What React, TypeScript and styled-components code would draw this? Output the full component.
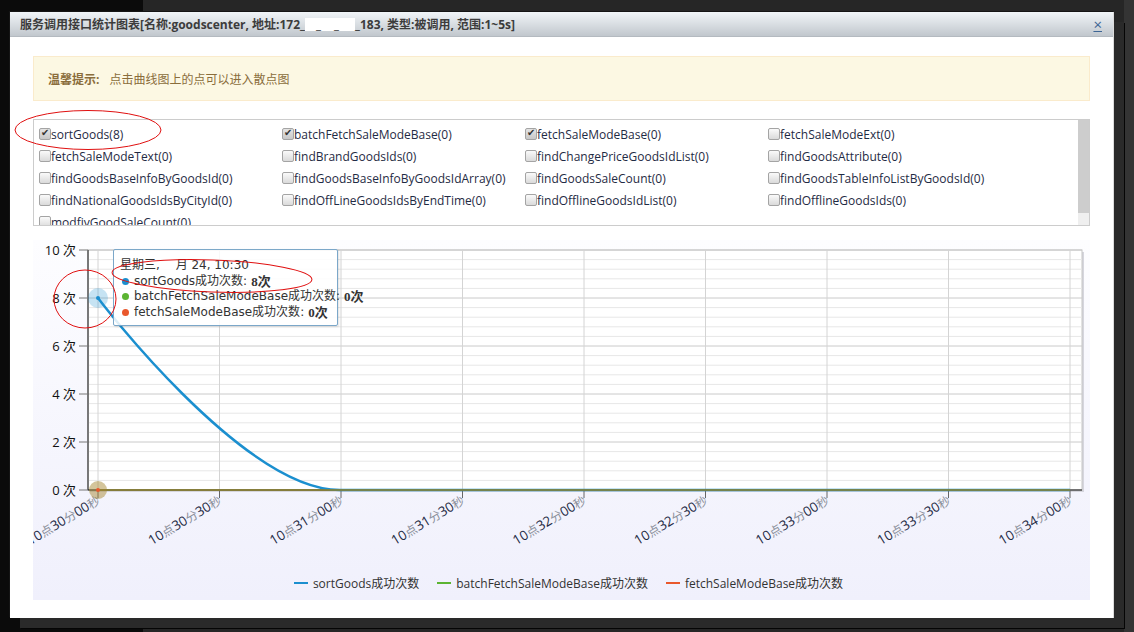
import React from 'react';
import styled, { createGlobalStyle } from 'styled-components';

const methods = [
  { name: 'sortGoods', count: 8, checked: true },
  { name: 'batchFetchSaleModeBase', count: 0, checked: true },
  { name: 'fetchSaleModeBase', count: 0, checked: true },
  { name: 'fetchSaleModeExt', count: 0 },
  { name: 'fetchSaleModeText', count: 0 },
  { name: 'findBrandGoodsIds', count: 0 },
  { name: 'findChangePriceGoodsIdList', count: 0 },
  { name: 'findGoodsAttribute', count: 0 },
  { name: 'findGoodsBaseInfoByGoodsId', count: 0 },
  { name: 'findGoodsBaseInfoByGoodsIdArray', count: 0 },
  { name: 'findGoodsSaleCount', count: 0 },
  { name: 'findGoodsTableInfoListByGoodsId', count: 0 },
  { name: 'findNationalGoodsIdsByCityId', count: 0 },
  { name: 'findOffLineGoodsIdsByEndTime', count: 0 },
  { name: 'findOfflineGoodsIdList', count: 0 },
  { name: 'findOfflineGoodsIds', count: 0 },
  { name: 'modfiyGoodSaleCount', count: 0 },
];

const series = [
  { name: 'sortGoods成功次数', color: '#1b8fcf' },
  { name: 'batchFetchSaleModeBase成功次数', color: '#5bb432' },
  { name: 'fetchSaleModeBase成功次数', color: '#e9582c' },
];

// plot geometry, relative to the chart panel
const X0 = 55;
const X1 = 1049;
const Y0 = 10;
const Y1 = 250;
const UNIT = 24;
const ticks = Array.from({ length: 9 }, (_, i) => 65 + i * 121.5);

const pad = (n: number) => (n < 10 ? '0' + n : String(n));

function timeParts(i: number) {
  const secs = 30 * 60 + i * 30;
  return [
    ['10', 'n'],
    ['点', 'c'],
    [pad(Math.floor(secs / 60)), 'n'],
    ['分', 'c'],
    [pad(secs % 60), 'n'],
    ['秒', 'c'],
  ];
}

const GlobalStyle = createGlobalStyle`
  body {
    margin: 0;
    background: #1c1c1c;
    font-family: "Open Sans", "Noto Sans CJK SC", sans-serif;
  }
`;

const Backdrop = styled.div`
  position: relative;
  width: 1134px;
  height: 632px;
  overflow: hidden;
  padding: 12px 0 0 10px;
  box-sizing: border-box;
  background: linear-gradient(to right, #0b0b0b 0 143px, #262626 143px 1124px, #343434 1124px);
`;

const Modal = styled.div`
  width: 1103px;
  height: 606px;
  background: #fff;
  border-right: 1px solid #dcdcdc;
  box-shadow: 10px 10px 0 #2a2a2a, 11px 11px 0 #050505, -1px -1px 0 #151515;
  display: flex;
  flex-direction: column;
`;

const Header = styled.div`
  height: 24px;
  flex: none;
  display: flex;
  align-items: center;
  justify-content: space-between;
  padding: 0 10px;
  background: linear-gradient(to bottom, #f1f5f8, #c1c7cd);
  border-bottom: 1px solid #b4bac0;
`;

const Title = styled.div`
  font-size: 12px;
  font-weight: 700;
  color: #3c3c3c;
  white-space: nowrap;
`;

const Masked = styled.span`
  display: inline-block;
  width: 50px;
  background: #fff;
  color: #555;
  letter-spacing: 5px;
  text-align: center;
  line-height: 13px;
`;

const CloseLink = styled.a`
  color: #3d6594;
  font-size: 15px;
  line-height: 15px;
  text-decoration: underline;
  cursor: pointer;
  margin-right: 1px;
`;

const Body = styled.div`
  padding: 19px 23px 18px;
  display: flex;
  flex-direction: column;
`;

const Tip = styled.div`
  height: 45px;
  box-sizing: border-box;
  display: flex;
  align-items: center;
  gap: 10px;
  padding: 0 14px;
  background: #fcf8e3;
  border: 1px solid #faebcc;
  color: #8a6d3b;
  font-size: 12px;
`;

const TipLabel = styled.strong`
  font-weight: 700;
`;

const MethodBox = styled.div`
  margin-top: 18px;
  height: 107px;
  box-sizing: border-box;
  border: 1px solid #cccccc;
  display: flex;
`;

const MethodList = styled.div`
  flex: 1;
  overflow: hidden;
  padding: 3px 0 0 5px;
  display: grid;
  grid-template-columns: repeat(4, 243px);
  grid-auto-rows: 22px;
`;

const ScrollTrack = styled.div`
  width: 11px;
  flex: none;
  background: #efefef;
`;

const ScrollThumb = styled.div`
  height: 93px;
  background: #cdcdcd;
`;

const MethodItem = styled.label`
  display: flex;
  align-items: center;
  font-size: 12px;
  color: #1f2b44;
  white-space: nowrap;
`;

const Check = styled.input`
  appearance: none;
  position: relative;
  width: 12px;
  height: 12px;
  margin: 0;
  flex: none;
  border: 1px solid #a4a4a4;
  border-radius: 2px;
  box-sizing: border-box;
  background: linear-gradient(to bottom, #fafafa, #dadada);

  &:checked {
    background: linear-gradient(to bottom, #e4e4e4, #c8c8c8);
  }
  &:checked::after {
    content: '✔';
    position: absolute;
    left: 1px;
    top: -2px;
    font-size: 10px;
    color: #333;
  }
`;

const ChartPanel = styled.div`
  position: relative;
  margin-top: 14px;
  height: 360px;
  background: linear-gradient(to bottom, #fdfdff, #f0f0fc);
  display: flex;
  flex-direction: column;
`;

const ChartSvg = styled.svg`
  display: block;
  flex: none;
  font-family: "Open Sans", "Noto Sans CJK SC", sans-serif;
`;

const Tooltip = styled.div`
  position: absolute;
  left: 80px;
  top: 9px;
  width: 225px;
  height: 77px;
  box-sizing: border-box;
  padding: 7px 0 0 6px;
  background: rgba(255, 255, 255, 0.85);
  border: 1px solid #7ba7c9;
  border-radius: 2px;
  box-shadow: 1px 1px 2px rgba(0, 0, 0, 0.12);
  font-family: "DejaVu Sans", "Noto Sans CJK SC", sans-serif;
  font-size: 12px;
  line-height: 15.5px;
  color: #333;
  white-space: nowrap;
`;

const TooltipRow = styled.div`
  display: flex;
  align-items: center;
`;

const Dot = styled.span<{ $color: string }>`
  flex: none;
  width: 7px;
  height: 7px;
  border-radius: 50%;
  background: ${(p) => p.$color};
  margin: 0 5px 0 2px;
`;

const Value = styled.b`
  font-family: "Liberation Serif", "Noto Sans CJK SC", serif;
  font-size: 13px;
  margin-left: 4px;
`;

const MonthMask = styled.span`
  display: inline-block;
  width: 12px;
  height: 12px;
  background: #fff;
`;

const Legend = styled.div`
  display: flex;
  justify-content: center;
  align-items: center;
  gap: 18px;
  height: 24px;
  margin-top: -5px;
  padding-left: 14px;
  font-size: 12px;
  color: #333;
`;

const LegendItem = styled.div`
  display: flex;
  align-items: center;
  gap: 5px;
`;

const LegendLine = styled.span<{ $color: string }>`
  width: 14px;
  height: 2px;
  background: ${(p) => p.$color};
`;

const Annotations = styled.svg`
  position: absolute;
  left: 0;
  top: 0;
  pointer-events: none;
`;

function Chart() {
  const minor: number[] = [];
  for (let k = 1; k < 25; k++) if (k % 5 !== 0) minor.push(Y1 - k * 9.6);
  const major = [0, 2, 4, 6, 8, 10];

  return (
    <ChartSvg width={1057} height={336}>
      <rect x={X0 + 2} y={Y0 + 2} width={X1 - X0} height={Y1 - Y0} fill="#d6d6de" />
      <rect x={X0} y={Y0} width={X1 - X0} height={Y1 - Y0} fill="#fff" stroke="#c4c4c4" />
      {minor.map((y) => (
        <line key={y} x1={X0} x2={X1} y1={y} y2={y} stroke="#e7e7e7" />
      ))}
      {major.map((v) => (
        <line key={v} x1={X0} x2={X1} y1={Y1 - v * UNIT} y2={Y1 - v * UNIT} stroke="#cacaca" />
      ))}
      {ticks.map((x) => (
        <line key={x} x1={x} x2={x} y1={Y0} y2={Y1} stroke="#d4d4d4" />
      ))}

      <line x1={X0} x2={X0} y1={Y0} y2={Y1} stroke="#111" />
      {major.map((v) => (
        <g key={v}>
          <line x1={X0 - 9} x2={X0} y1={Y1 - v * UNIT} y2={Y1 - v * UNIT} stroke="#777" />
          <text x={X0 - 12} y={Y1 - v * UNIT + 5} textAnchor="end" fontSize={13} fill="#111">
            {v} 次
          </text>
        </g>
      ))}
      <line x1={X0} x2={X1} y1={Y1} y2={Y1} stroke="#111" />
      {ticks.map((x, i) => (
        <g key={x}>
          <line x1={x} x2={x} y1={Y1} y2={Y1 + 8} stroke="#666" />
          <text
            x={x + 3}
            y={Y1 + 13}
            textAnchor="end"
            fontSize={13}
            fill="#1e2a44"
            transform={`rotate(-31 ${x + 3} ${Y1 + 13})`}
          >
            {timeParts(i).map(([t, kind], j) => (
              <tspan key={j} fill={kind === 'c' ? '#8a8f9a' : undefined} fontSize={kind === 'c' ? 12 : 13.5}>
                {t}
              </tspan>
            ))}
          </text>
        </g>
      ))}

      <path
        d={`M65 58 C65 58 210.2 ${Y1} 307 ${Y1} L1037 ${Y1}`}
        fill="none"
        stroke="#1b8fcf"
        strokeWidth={2.5}
      />
      <line x1={65} x2={1037} y1={Y1} y2={Y1} stroke="#5bb432" strokeWidth={2} strokeOpacity={0.6} />
      <line x1={65} x2={1037} y1={Y1} y2={Y1} stroke="#a8622c" strokeWidth={2} strokeOpacity={0.5} />

      <circle cx={65} cy={58} r={10} fill="#1b8fcf" fillOpacity={0.25} />
      <circle cx={65} cy={58} r={2} fill="#1b8fcf" />
      <circle cx={65} cy={Y1} r={9} fill="#5bb432" fillOpacity={0.25} />
      <circle cx={65} cy={Y1} r={9} fill="#d06a2a" fillOpacity={0.3} />
      <circle cx={65} cy={Y1} r={2} fill="#e9582c" />
    </ChartSvg>
  );
}

export default function App() {
  return (
    <Backdrop>
      <GlobalStyle />
      <Modal>
        <Header>
          <Title>
            服务调用接口统计图表[名称:goodscenter, 地址:172_<Masked>_ _</Masked>_183, 类型:被调用, 范围:1~5s]
          </Title>
          <CloseLink>×</CloseLink>
        </Header>
        <Body>
          <Tip>
            <TipLabel>温馨提示:</TipLabel>
            <span>点击曲线图上的点可以进入散点图</span>
          </Tip>
          <MethodBox>
            <MethodList>
              {methods.map((m) => (
                <MethodItem key={m.name}>
                  <Check type="checkbox" defaultChecked={!!m.checked} />
                  {m.name}({m.count})
                </MethodItem>
              ))}
            </MethodList>
            <ScrollTrack>
              <ScrollThumb />
            </ScrollTrack>
          </MethodBox>
          <ChartPanel>
            <Chart />
            <Tooltip>
              <div>
                星期三, <MonthMask />月 24, 10:30
              </div>
              <TooltipRow>
                <Dot $color={series[0].color} />
                {series[0].name}: <Value>8次</Value>
              </TooltipRow>
              <TooltipRow>
                <Dot $color={series[1].color} />
                {series[1].name}: <Value>0次</Value>
              </TooltipRow>
              <TooltipRow>
                <Dot $color={series[2].color} />
                {series[2].name}: <Value>0次</Value>
              </TooltipRow>
            </Tooltip>
            <Legend>
              {series.map((s) => (
                <LegendItem key={s.name}>
                  <LegendLine $color={s.color} />
                  {s.name}
                </LegendItem>
              ))}
            </Legend>
          </ChartPanel>
        </Body>
      </Modal>
      <Annotations width={1134} height={632}>
        <ellipse cx={88} cy={130} rx={73} ry={19.5} fill="none" stroke="#e01010" />
        <ellipse cx={85} cy={299} rx={31} ry={29} fill="none" stroke="#e01010" />
        <ellipse cx={212} cy={276} rx={100} ry={16} fill="none" stroke="#e01010" transform="rotate(2 212 276)" />
      </Annotations>
    </Backdrop>
  );
}
